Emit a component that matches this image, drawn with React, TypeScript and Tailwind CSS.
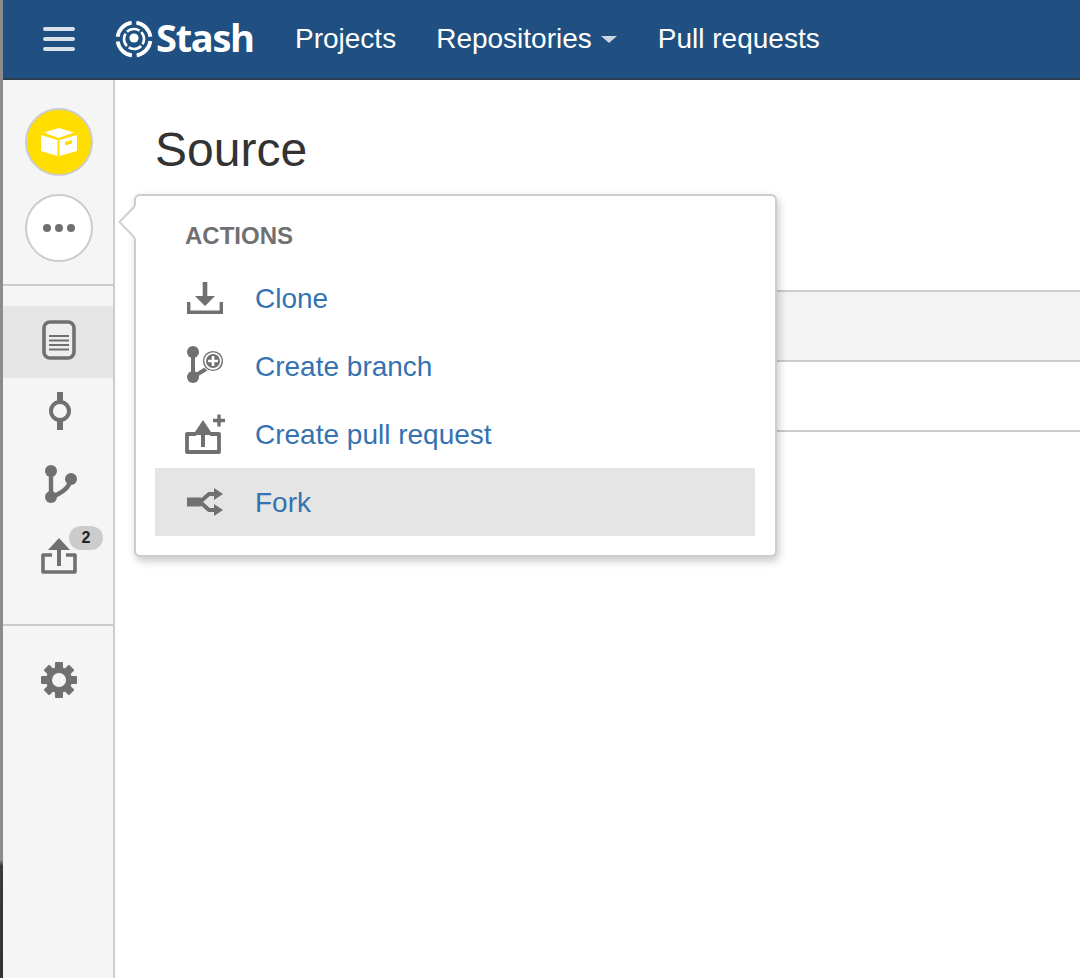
import React from "react";

const G = "#707070";

function Logo() {
  return (
    <svg width="38" height="38" viewBox="0 0 38 38" fill="none" stroke="#fff">
      <circle cx="19" cy="19" r="16.5" strokeWidth="3.8" strokeDasharray="21 4.9" strokeDashoffset="-2" />
      <circle cx="19" cy="19" r="10" strokeWidth="2.6" strokeDasharray="13.5 2.2" strokeDashoffset="8" />
      <circle cx="19" cy="18" r="4.6" fill="#fff" stroke="none" />
    </svg>
  );
}

function BoxIcon() {
  return (
    <svg width="36" height="28" viewBox="0 0 36 28" fill="#fff">
      <path d="M0 7 L16.5 12 V28 L0 23 Z" />
      <path d="M18.5 12 L36 7 V23 L18.5 28 Z" />
      <path d="M18 0 L33 4.5 L17.5 10 L3 4.5 Z" />
      <path d="M24 14 L31 12 V15.5 L24 17.5 Z" fill="#ffdd00" />
    </svg>
  );
}

function FileIcon() {
  return (
    <svg width="34" height="40" viewBox="0 0 34 40" fill="none">
      <rect x="2" y="2" width="30" height="36" rx="6" stroke={G} strokeWidth="3.6" fill="#eeeeee" />
      <path d="M7 16H27M7 20.5H27M7 25H27M7 29.5H27" stroke={G} strokeWidth="1.8" />
    </svg>
  );
}

function CommitIcon() {
  return (
    <svg width="22" height="38" viewBox="0 0 22 38" fill="none" stroke={G}>
      <path d="M11 0V10M11 28V38" strokeWidth="6" />
      <circle cx="11" cy="19" r="9" strokeWidth="4" />
    </svg>
  );
}

function BranchIcon() {
  return (
    <svg width="32" height="38" viewBox="0 0 32 38" fill={G}>
      <circle cx="6" cy="6" r="6" />
      <circle cx="6" cy="32" r="6" />
      <circle cx="26" cy="14" r="6" />
      <path d="M6 6V32C15 29 24 24 26 14" fill="none" stroke={G} strokeWidth="4.4" />
    </svg>
  );
}

function PrIcon() {
  return (
    <svg width="36" height="36" viewBox="0 0 36 36" fill="none">
      <path d="M11 17H2V34H34V17H25" stroke={G} strokeWidth="3.6" strokeLinejoin="round" />
      <path d="M18 0L29 12H20V28H16V12H7Z" fill={G} />
    </svg>
  );
}

function GearIcon() {
  return (
    <svg width="36" height="36" viewBox="0 0 36 36">
      {[0, 45, 90, 135, 180, 225, 270, 315].map((a) => (
        <rect key={a} x="14" y="0" width="8" height="9" rx="1" fill={G} transform={`rotate(${a} 18 18)`} />
      ))}
      <circle cx="18" cy="18" r="13" fill={G} />
      <circle cx="18" cy="18" r="7" fill="#f5f5f5" />
    </svg>
  );
}

function CloneIcon() {
  return (
    <svg width="36" height="32" viewBox="0 0 36 32" fill={G}>
      <path d="M15.7 0H20.3V14H28L18 24L8 14H15.7Z" />
      <path d="M0 20H3.4V28.6H32.6V20H36V32H0Z" />
    </svg>
  );
}

function CreateBranchIcon() {
  return (
    <svg width="36" height="37" viewBox="0 0 36 37" fill="none" className="-mt-[3px]">
      <circle cx="6" cy="6" r="6" fill={G} />
      <circle cx="6" cy="31" r="6" fill={G} />
      <path d="M6 6V31L24 20" stroke={G} strokeWidth="4" />
      <circle cx="26" cy="15" r="11" fill="#fff" />
      <circle cx="26" cy="15" r="9.4" stroke={G} strokeWidth="1.4" />
      <circle cx="26" cy="15" r="7" fill={G} />
      <path d="M26 10V20M21 15H31" stroke="#fff" strokeWidth="2.6" />
    </svg>
  );
}

function CreatePrIcon() {
  return (
    <svg width="40" height="40" viewBox="0 0 40 40" fill="none" className="-ml-[2px]">
      <path d="M11 20H2V38H34V20H25" stroke={G} strokeWidth="3.8" strokeLinejoin="round" />
      <path d="M18 6L28 21H20V33H16V21H8Z" fill={G} />
      <path d="M34 0.5V12.5M28 6.5H40" stroke={G} strokeWidth="3.4" />
    </svg>
  );
}

function ForkIcon() {
  return (
    <svg width="36" height="28" viewBox="0 0 36 28" fill="none">
      <path d="M0 9.5H14V18.5H0Z" fill={G} />
      <path d="M13 14L22 6H30M13 14L22 22H30" stroke={G} strokeWidth="4" />
      <path d="M27 0L36 6L27 12Z" fill={G} />
      <path d="M27 16L36 22L27 28Z" fill={G} />
    </svg>
  );
}

function MenuRow({ icon, label, active }: { icon: React.ReactNode; label: string; active?: boolean }) {
  return (
    <div className={`flex h-[68px] items-center ${active ? "bg-[#e5e5e5]" : ""}`}>
      <div className="ml-[32px] flex w-[68px] shrink-0 items-center">{icon}</div>
      <span className="pt-[1px] text-[28px] text-[#3572b0]">{label}</span>
    </div>
  );
}

function SideItem({ children, className }: { children: React.ReactNode; className: string }) {
  return <div className={`flex items-center justify-center ${className}`}>{children}</div>;
}

export default function App() {
  return (
    <div
      className="relative flex h-[978px] w-[1080px] overflow-hidden bg-white text-[#333333]"
      style={{ fontFamily: '"Liberation Sans", Arial, sans-serif' }}
    >
      <div className="h-full w-[3px] shrink-0 bg-[linear-gradient(to_bottom,#8c8c8c_0,#8c8c8c_860px,#3a3a3a_866px,#333333_100%)]" />

      <div className="flex min-w-0 flex-1 flex-col">
        <header className="flex h-[80px] shrink-0 items-center border-b-2 border-[#2c3e50] bg-[#205081] text-white">
          <div className="ml-[40px] flex w-[32px] flex-col gap-[5.5px]">
            <div className="h-[4.5px] rounded-sm bg-[#d9e1ea]" />
            <div className="h-[4.5px] rounded-sm bg-[#d9e1ea]" />
            <div className="h-[4.5px] rounded-sm bg-[#d9e1ea]" />
          </div>
          <div className="ml-[40px] flex w-[139px] items-center">
            <Logo />
            <span
              className="mb-[4px] ml-[3px] text-[38px] leading-none font-bold tracking-[-1.3px]"
              style={{ fontFamily: '"Open Sans", sans-serif' }}
            >
              Stash
            </span>
          </div>
          <nav className="ml-[41px] flex items-center text-[28px] text-white">
            <span>Projects</span>
            <span className="ml-[40px]">Repositories</span>
            <span className="ml-[9px] mt-[1px] h-0 w-0 border-x-[8px] border-t-[7px] border-x-transparent border-t-[#ccd6e0]" />
            <span className="ml-[41px]">Pull requests</span>
          </nav>
        </header>

        <div className="flex min-h-0 flex-1">
          <aside className="flex w-[112px] shrink-0 flex-col border-r-2 border-[#cccccc] bg-[#f5f5f5]">
            <div className="flex flex-col items-center gap-[18px] pl-[2px] pt-[28px]">
              <div className="flex h-[68px] w-[68px] items-center justify-center rounded-full border-2 border-[#cccccc] bg-[#ffdd00]">
                <BoxIcon />
              </div>
              <div className="flex h-[68px] w-[68px] items-center justify-center gap-[4px] rounded-full border-2 border-[#cccccc] bg-white">
                <span className="h-[8px] w-[8px] rounded-full bg-[#707070]" />
                <span className="h-[8px] w-[8px] rounded-full bg-[#707070]" />
                <span className="h-[8px] w-[8px] rounded-full bg-[#707070]" />
              </div>
            </div>
            <div className="mt-[22px] h-[2px] bg-[#cccccc]" />
            <div className="mt-[20px] flex flex-col">
              <SideItem className="h-[72px] bg-[#e5e5e5] pb-[4px] pl-[2px]">
                <FileIcon />
              </SideItem>
              <SideItem className="h-[70px] pb-[4px] pl-[4px]">
                <CommitIcon />
              </SideItem>
              <SideItem className="h-[71px] pl-[6px]">
                <BranchIcon />
              </SideItem>
              <div className="relative">
                <SideItem className="h-[71px] pl-[2px] pt-[3px]">
                  <PrIcon />
                </SideItem>
                <span className="absolute left-[66px] top-[7px] flex h-[24px] w-[34px] items-center justify-center rounded-full bg-[#cccccc] text-[16px] font-bold text-[#222222]">
                  2
                </span>
              </div>
            </div>
            <div className="mt-[34px] h-[2px] bg-[#cccccc]" />
            <div className="mt-[36px] flex justify-center pl-[2px]">
              <GearIcon />
            </div>
          </aside>

          <main className="min-w-0 flex-1 pl-[40px]">
            <h1 className="mt-[42px] text-[48px] leading-[56px] font-normal text-[#333333]">Source</h1>
            <div className="mt-[112px] h-[72px] border-y-2 border-[#cccccc] bg-[#f4f4f4]" />
            <div className="h-[70px] border-b-2 border-[#cccccc]" />
          </main>
        </div>
      </div>

      <div className="absolute left-[134px] top-[194px] w-[643px] rounded-[6px] border-2 border-[#cccccc] bg-white pb-[19px] pl-[19px] pr-[20px] pt-[19px] shadow-[2px_4px_8px_rgba(0,0,0,0.22)]">
        <svg className="absolute left-[-18px] top-[9px]" width="20" height="34" viewBox="0 0 20 34" fill="none">
          <path d="M18 0L1 17L18 34Z" fill="#ffffff" />
          <path d="M17 1L1.5 17L17 33" stroke="#d0d0d0" strokeWidth="2" />
          <rect x="17" y="2" width="3" height="30" fill="#ffffff" />
        </svg>
        <div className="ml-[30px] h-[49px] text-[24px] leading-[42px] font-bold text-[#707070]">ACTIONS</div>
        <MenuRow icon={<CloneIcon />} label="Clone" />
        <MenuRow icon={<CreateBranchIcon />} label="Create branch" />
        <MenuRow icon={<CreatePrIcon />} label="Create pull request" />
        <MenuRow icon={<ForkIcon />} label="Fork" active />
      </div>
    </div>
  );
}
